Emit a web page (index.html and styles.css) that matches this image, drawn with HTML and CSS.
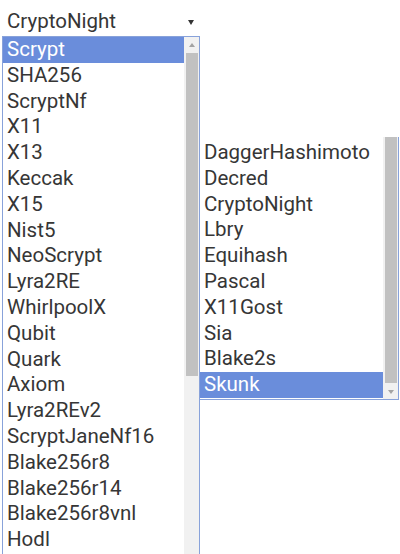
FILE: index.html
```html
<!DOCTYPE html>
<html>
<head>
<meta charset="utf-8">
<link rel="stylesheet" href="styles.css">
</head>
<body>
<div class="page">
  <div class="select">
    <span class="select-value">CryptoNight</span>
    <span class="select-arrow"></span>
  </div>
  <div class="listbox listbox-main">
    <ul class="options">
      <li class="selected">Scrypt</li>
      <li>SHA256</li>
      <li>ScryptNf</li>
      <li>X11</li>
      <li>X13</li>
      <li>Keccak</li>
      <li>X15</li>
      <li>Nist5</li>
      <li>NeoScrypt</li>
      <li>Lyra2RE</li>
      <li>WhirlpoolX</li>
      <li>Qubit</li>
      <li>Quark</li>
      <li>Axiom</li>
      <li>Lyra2REv2</li>
      <li>ScryptJaneNf16</li>
      <li>Blake256r8</li>
      <li>Blake256r14</li>
      <li>Blake256r8vnl</li>
      <li>Hodl</li>
    </ul>
    <div class="scrollbar scrollbar-main">
      <div class="sb-btn"><span class="tri-up"></span></div>
      <div class="sb-track"><div class="sb-thumb thumb-main"></div></div>
      <div class="sb-btn"><span class="tri-down"></span></div>
    </div>
  </div>
  <div class="listbox listbox-popup">
    <ul class="options">
      <li>DaggerHashimoto</li>
      <li>Decred</li>
      <li>CryptoNight</li>
      <li>Lbry</li>
      <li>Equihash</li>
      <li>Pascal</li>
      <li>X11Gost</li>
      <li>Sia</li>
      <li>Blake2s</li>
      <li class="selected">Skunk</li>
    </ul>
    <div class="scrollbar scrollbar-popup">
      <div class="sb-track"><div class="sb-thumb thumb-popup"></div></div>
      <div class="sb-btn"><span class="tri-down"></span></div>
    </div>
  </div>
</div>
</body>
</html>
```

FILE: styles.css
```css
* { box-sizing: border-box; }
html, body {
  margin: 0;
  padding: 0;
  background: #ffffff;
}
body {
  font-family: Roboto, "Liberation Sans", sans-serif;
  font-size: 20.5px;
  color: #363636;
}
.page {
  position: relative;
  width: 400px;
  height: 554px;
  overflow: hidden;
}
.select {
  height: 36px;
  padding: 9px 0 0 7px;
  width: 200px;
  display: flex;
  align-items: flex-start;
  line-height: 25.8px;
}
.select-value { flex: 1; }
.select-arrow {
  width: 0;
  height: 0;
  border-left: 3px solid transparent;
  border-right: 3px solid transparent;
  border-top: 5px solid #333;
  margin: 11px 6px 0 0;
}
.listbox {
  display: flex;
  background: #fff;
  border: 1px solid #88a2da;
}
.listbox-main {
  margin-left: 2px;
  width: 198px;
  height: 540px;
  border-bottom: none;
}
.listbox-popup {
  position: absolute;
  left: 199px;
  top: 137px;
  width: 200px;
  height: 263px;
  border-top: none;
}
.options {
  list-style: none;
  margin: 0;
  padding: 0;
  flex: 1;
  min-width: 0;
}
.listbox-popup .options { padding-top: 3px; }
.options li {
  height: 25.8px;
  line-height: 25.8px;
  padding-left: 4px;
  white-space: nowrap;
}
.options li.selected {
  background: #6a8ddb;
  color: #ffffff;
}
.scrollbar {
  width: 15px;
  background: #f1f1f1;
  display: flex;
  flex-direction: column;
}
.sb-btn {
  height: 15px;
  display: flex;
  align-items: center;
  justify-content: center;
  flex: none;
}
.sb-track {
  flex: 1;
  padding: 0 1.5px;
}
.sb-thumb {
  background: #c1c1c1;
}
.thumb-main { margin-top: 1px; height: 323px; }
.thumb-popup { height: 246px; }
.tri-up {
  width: 0; height: 0;
  border-left: 3.5px solid transparent;
  border-right: 3.5px solid transparent;
  border-bottom: 4px solid #a3a3a3;
}
.tri-down {
  width: 0; height: 0;
  border-left: 3.5px solid transparent;
  border-right: 3.5px solid transparent;
  border-top: 4px solid #a3a3a3;
}
.scrollbar-main .sb-btn:last-child { height: 24px; align-items: flex-start; padding-top: 7px; }
```
